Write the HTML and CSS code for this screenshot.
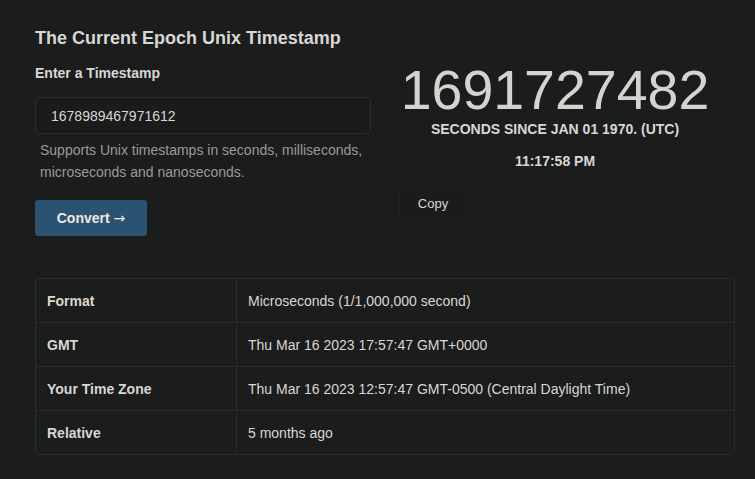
FILE: index.html
```html
<!DOCTYPE html>
<html lang="en">
<head>
<meta charset="utf-8">
<title>Epoch Unix Timestamp</title>
<link rel="stylesheet" href="styles.css">
</head>
<body>
<main class="page">
  <section class="top">
    <div class="left">
      <h1 class="title">The Current Epoch Unix Timestamp</h1>
      <label class="label" for="ts">Enter a Timestamp</label>
      <input class="input" id="ts" type="text" value="1678989467971612">
      <p class="help">Supports Unix timestamps in seconds, milliseconds, microseconds and nanoseconds.</p>
      <button class="convert">Convert <span class="arrow">→</span></button>
    </div>
    <div class="right">
      <div class="epoch">1691727482</div>
      <div class="since">SECONDS SINCE JAN 01 1970. (UTC)</div>
      <div class="clock">11:17:58 PM</div>
      <button class="copy">Copy</button>
    </div>
  </section>
  <table class="result">
    <tr><th>Format</th><td>Microseconds (1/1,000,000 second)</td></tr>
    <tr><th>GMT</th><td>Thu Mar 16 2023 17:57:47 GMT+0000</td></tr>
    <tr><th>Your Time Zone</th><td>Thu Mar 16 2023 12:57:47 GMT-0500 (Central Daylight Time)</td></tr>
    <tr><th>Relative</th><td>5 months ago</td></tr>
  </table>
</main>
</body>
</html>
```
FILE: styles.css
```css
html, body {
  margin: 0;
  background: #1b1c1c;
  color: #d9d7d3;
  font-family: "Liberation Sans", Arial, sans-serif;
}
.page {
  width: 700px;
  padding: 28px 20px 0 35px;
}
.top {
  display: grid;
  grid-template-columns: 336px 1fr;
  gap: 4px;
}
.left {
  display: flex;
  flex-direction: column;
  align-items: flex-start;
}
.title {
  margin: 0;
  font-size: 18px;
  font-weight: bold;
  line-height: 21px;
}
.label {
  margin-top: 16px;
  font-size: 14px;
  font-weight: bold;
  line-height: 16px;
}
.input {
  box-sizing: border-box;
  margin-top: 16px;
  width: 336px;
  height: 37px;
  padding: 0 15px;
  background: #1a1b1b;
  border: 1px solid #2c2d2e;
  border-radius: 4px;
  color: #d9d7d3;
  font-family: inherit;
  font-size: 14px;
  outline: none;
}
.help {
  margin: 5px 0 0;
  padding-left: 5px;
  font-size: 14px;
  line-height: 22px;
  color: #9c9a97;
}
.convert {
  margin-top: 17px;
  width: 112px;
  height: 36px;
  border: 0;
  border-radius: 3px;
  background: #2c5272;
  color: #ece9e4;
  font-family: inherit;
  font-size: 14px;
  font-weight: bold;
}
.arrow {
  font-family: "DejaVu Sans", sans-serif;
  font-weight: normal;
  font-size: 14px;
}
.right {
  display: flex;
  flex-direction: column;
  align-items: center;
  padding-top: 32px;
}
.epoch {
  font-size: 55.5px;
  line-height: 60px;
  color: #d6d3cf;
}
.since {
  margin-top: 1px;
  font-size: 14px;
  font-weight: bold;
  line-height: 16px;
}
.clock {
  margin-top: 16px;
  font-size: 14px;
  font-weight: bold;
  line-height: 16px;
}
.copy {
  align-self: flex-start;
  margin: 18px 0 0 24px;
  width: 68px;
  height: 32px;
  background: #1a1b1b;
  border: 1px solid #202122;
  border-radius: 4px;
  color: #d9d7d3;
  font-family: inherit;
  font-size: 13px;
}
.result {
  margin-top: 42px;
  width: 700px;
  border-collapse: separate;
  border-spacing: 0;
  border: 1px solid #2a2b2c;
  border-radius: 4px;
  font-size: 14px;
}
.result th, .result td {
  height: 43px;
  padding: 0 11px;
  text-align: left;
  border-top: 1px solid #2a2b2c;
}
.result tr:first-child th, .result tr:first-child td {
  border-top: 0;
  height: 43px;
}
.result th {
  width: 178px;
  font-weight: bold;
  border-right: 1px solid #2a2b2c;
}
```
